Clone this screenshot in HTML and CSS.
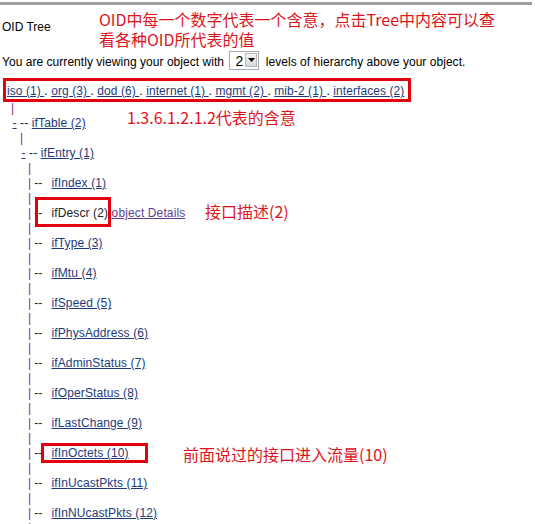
FILE: index.html
```html
<!DOCTYPE html>
<html>
<head>
<meta charset="utf-8">
<title>OID Tree</title>
<link rel="stylesheet" href="styles.css">
</head>
<body>
<div class="rule"></div>
<div class="title">OID Tree</div>
<div class="viewing">You are currently viewing your object with <span class="select"><span class="sel-val">2</span><span class="sel-btn"><svg width="7" height="4" viewBox="0 0 7 4"><path d="M0 0H7L3.5 4Z" fill="#000"/></svg></span></span> levels of hierarchy above your object.</div>
<div class="crumbs"><a href="#">iso (1) </a>. <a href="#">org (3) </a>. <a href="#">dod (6) </a>. <a href="#">internet (1) </a>. <a href="#">mgmt (2) </a>. <a href="#">mib-2 (1) </a>. <a href="#">interfaces (2)</a></div>
<div class="tree">
  <div class="line lv1"><span class="bar">|</span></div>
  <div class="line rw1"><a href="#">-</a> -- <a href="#">ifTable (2)</a></div>
  <div class="line lv2"><span class="bar">|</span></div>
  <div class="line rw2"><a href="#">-</a> -- <a href="#">ifEntry (1)</a></div>
  <div class="line lv3"><span class="bar">|</span></div>
  <div class="line lv3"><span class="bar">|</span><span class="dd">--</span><a href="#">ifIndex (1)</a></div>
  <div class="line lv3"><span class="bar">|</span></div>
  <div class="line lv3"><span class="bar">|</span><span class="dd">--</span>ifDescr (2) <a href="#" class="visited">object Details</a></div>
  <div class="line lv3"><span class="bar">|</span></div>
  <div class="line lv3"><span class="bar">|</span><span class="dd">--</span><a href="#">ifType (3)</a></div>
  <div class="line lv3"><span class="bar">|</span></div>
  <div class="line lv3"><span class="bar">|</span><span class="dd">--</span><a href="#">ifMtu (4)</a></div>
  <div class="line lv3"><span class="bar">|</span></div>
  <div class="line lv3"><span class="bar">|</span><span class="dd">--</span><a href="#">ifSpeed (5)</a></div>
  <div class="line lv3"><span class="bar">|</span></div>
  <div class="line lv3"><span class="bar">|</span><span class="dd">--</span><a href="#">ifPhysAddress (6)</a></div>
  <div class="line lv3"><span class="bar">|</span></div>
  <div class="line lv3"><span class="bar">|</span><span class="dd">--</span><a href="#">ifAdminStatus (7)</a></div>
  <div class="line lv3"><span class="bar">|</span></div>
  <div class="line lv3"><span class="bar">|</span><span class="dd">--</span><a href="#">ifOperStatus (8)</a></div>
  <div class="line lv3"><span class="bar">|</span></div>
  <div class="line lv3"><span class="bar">|</span><span class="dd">--</span><a href="#">ifLastChange (9)</a></div>
  <div class="line lv3"><span class="bar">|</span></div>
  <div class="line lv3"><span class="bar">|</span><span class="dd">--</span><a href="#">ifInOctets (10)</a></div>
  <div class="line lv3"><span class="bar">|</span></div>
  <div class="line lv3"><span class="bar">|</span><span class="dd">--</span><a href="#">ifInUcastPkts (11)</a></div>
  <div class="line lv3"><span class="bar">|</span></div>
  <div class="line lv3"><span class="bar">|</span><span class="dd">--</span><a href="#">ifInNUcastPkts (12)</a></div>
  <div class="line lv3"><span class="bar">|</span></div>
</div>

<div class="ann ann1">OID中每一个数字代表一个含意，点击Tree中内容可以查<br>看各种OID所代表的值</div>
<div class="ann ann2">1.3.6.1.2.1.2代表的含意</div>
<div class="ann ann3">接口描述(2)</div>
<div class="ann ann4">前面说过的接口进入流量(10)</div>

<div class="box box1"></div>
<div class="box box2"></div>
<div class="box box3"></div>
</body>
</html>
```
FILE: styles.css
```css
html, body {
  margin: 0;
  padding: 0;
  background: #fff;
}
body {
  position: relative;
  width: 535px;
  height: 524px;
  overflow: hidden;
  font-family: "Liberation Sans", Arial, sans-serif;
  font-size: 12px;
  color: #000;
}
a {
  color: #1e3a78;
  text-decoration: underline;
}
a.visited {
  color: #5b3f8f;
}
.rule {
  margin-top: 2px;
  height: 3px;
  width: 532px;
  background: #a0a0a0;
}
.title {
  margin-top: 15px;
  line-height: 15px;
  padding-left: 2px;
}
.viewing {
  margin-top: 16px;
  height: 20px;
  line-height: 20px;
  padding-left: 2px;
  white-space: nowrap;
  letter-spacing: 0.04px;
}
.select {
  display: inline-flex;
  vertical-align: baseline;
  box-sizing: border-box;
  width: 30px;
  height: 19px;
  margin: 0 3px 0 2px;
  padding: 2px 1px 1px 1px;
  border: 1px solid #a5acb2;
  background: #fff;
  letter-spacing: 0;
}
.sel-val {
  flex: 1;
  font-size: 14px;
  line-height: 14px;
  padding-left: 4px;
}
.sel-btn {
  box-sizing: border-box;
  width: 12px;
  height: 14px;
  margin-top: -1px;
  border: 1px solid #b8b8b8;
  background: linear-gradient(#f4f4f4, #d8d8d8);
  display: flex;
  align-items: center;
  justify-content: center;
}
.crumbs {
  margin-top: 13px;
  line-height: 15px;
  padding-left: 7px;
  white-space: nowrap;
  letter-spacing: 0.08px;
}
.tree {
  margin-top: 2px;
  letter-spacing: 0.12px;
}
.line {
  height: 15px;
  line-height: 15px;
  white-space: nowrap;
  color: #222;
}
.bar {
  color: #7f2f80;
}
.lv1 { padding-left: 11px; }
.rw1 { padding-left: 12.5px; }
.lv2 { padding-left: 20px; }
.rw2 { padding-left: 21.5px; }
.lv3 { padding-left: 28px; }
.dd {
  margin: 0 9px 0 3px;
}
.ann {
  position: absolute;
  font-family: "Noto Sans CJK SC", "Liberation Sans", sans-serif;
  font-size: 16px;
  line-height: 20px;
  color: #e0121b;
  white-space: nowrap;
}
.ann1 { left: 99px; top: 9px; }
.ann2 { left: 127px; top: 107px; }
.ann3 { left: 205px; top: 201px; }
.ann4 { left: 183px; top: 444px; }
.box {
  position: absolute;
  box-sizing: border-box;
  border: 3px solid #e3000f;
}
.box1 { left: 3px; top: 78px; width: 408px; height: 24px; }
.box2 { left: 35px; top: 197px; width: 76px; height: 30px; }
.box3 { left: 41px; top: 443px; width: 107px; height: 20px; }
```
